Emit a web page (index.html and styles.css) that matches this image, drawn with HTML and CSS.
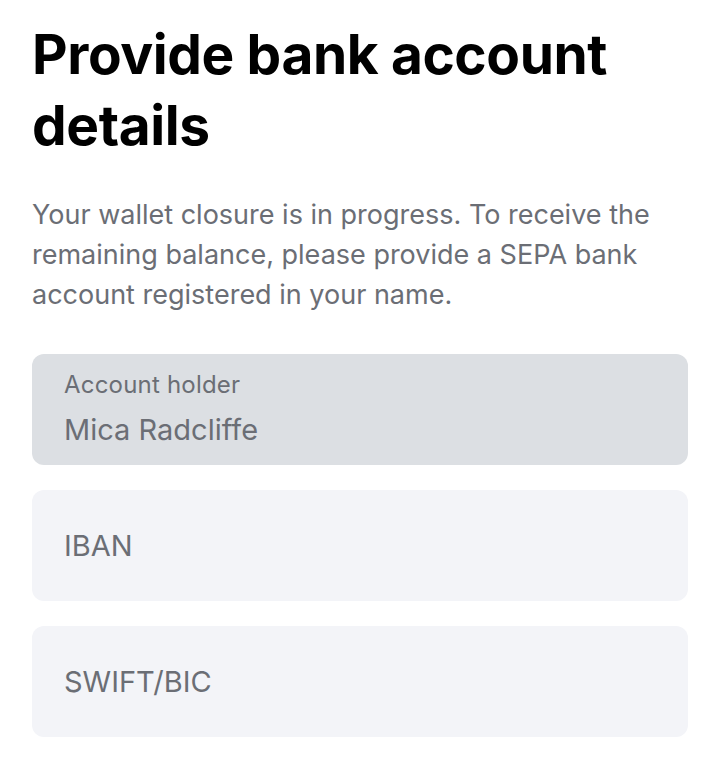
FILE: index.html
```html
<!DOCTYPE html>
<html lang="en">
<head>
<meta charset="utf-8">
<link rel="stylesheet" href="styles.css">
</head>
<body>
<main class="page">
  <h1 class="title">Provide bank account details</h1>
  <p class="intro">Your wallet closure is in progress. To receive the remaining balance, please provide a SEPA bank account registered in your name.</p>
  <form class="form">
    <div class="field field--filled">
      <span class="field__label">Account holder</span>
      <span class="field__value">Mica Radcliffe</span>
    </div>
    <div class="field">
      <span class="field__placeholder">IBAN</span>
    </div>
    <div class="field">
      <span class="field__placeholder">SWIFT/BIC</span>
    </div>
  </form>
</main>
</body>
</html>
```
FILE: styles.css
```css
html, body {
  margin: 0;
  padding: 0;
  background: #ffffff;
}
body {
  font-family: Inter, "Noto Sans", sans-serif;
  color: #000;
}
.page {
  padding: 19px 32px 0 32px;
}
.title {
  margin: 0;
  font-size: 55px;
  line-height: 71px;
  font-weight: 700;
  letter-spacing: -0.4px;
  color: #000;
}
.intro {
  margin: 34px 0 0 0;
  font-size: 27px;
  line-height: 40px;
  color: #6b6e75;
}
.form {
  margin-top: 39px;
  display: flex;
  flex-direction: column;
  gap: 25px;
}
.field {
  height: 111px;
  box-sizing: border-box;
  border-radius: 12px;
  background: #f3f4f8;
  padding: 0 32px;
  display: flex;
  flex-direction: column;
  justify-content: center;
}
.field--filled {
  background: #dcdfe3;
  justify-content: flex-start;
  padding-top: 16px;
  gap: 12px;
}
.field__label {
  font-size: 24px;
  line-height: 30px;
  letter-spacing: 0.2px;
  color: #6b6e75;
}
.field__value {
  font-size: 29px;
  line-height: 36px;
  color: #6b6e75;
}
.field__placeholder {
  font-size: 29px;
  line-height: 36px;
  color: #6b6e75;
}
```
